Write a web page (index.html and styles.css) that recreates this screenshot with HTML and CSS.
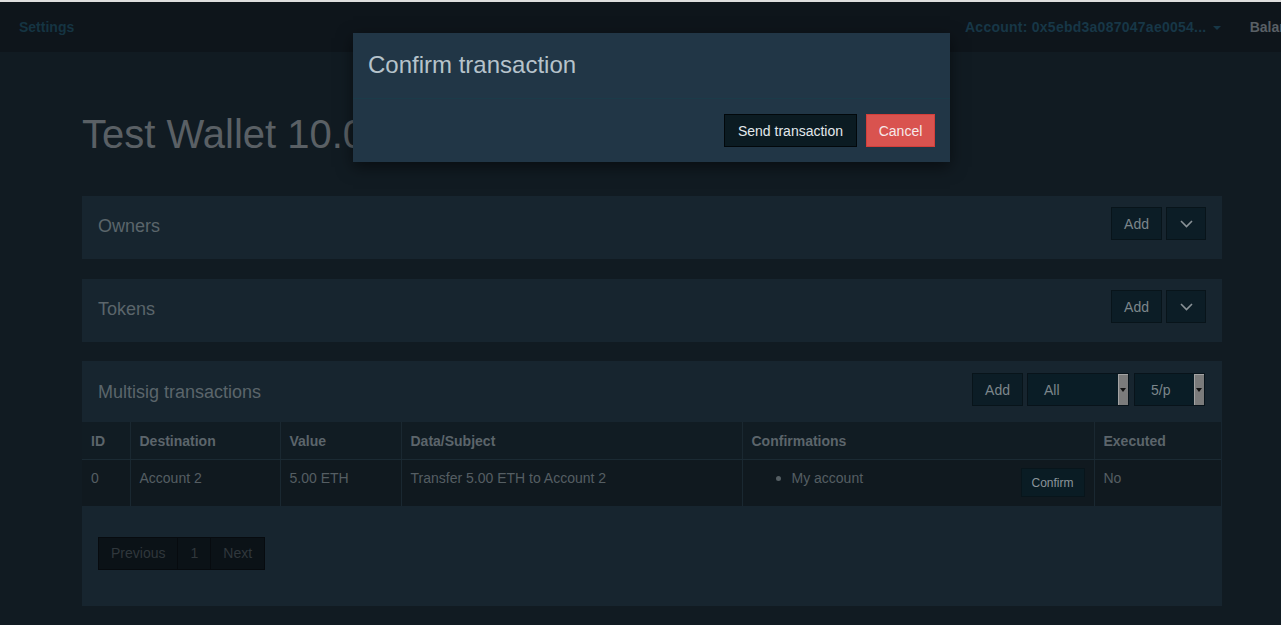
FILE: index.html
```html
<!DOCTYPE html>
<html lang="en">
<head>
<meta charset="utf-8">
<title>Test Wallet</title>
<link rel="stylesheet" href="styles.css">
</head>
<body>
<div class="topline"></div>
<nav class="navbar">
  <div class="nav-left"><a class="nav-link">Settings</a></div>
  <div class="nav-right">
    <a class="nav-link account">Account: 0x5ebd3a087047ae0054... <span class="caret"></span></a>
    <span class="nav-text">Balance: 100.00 ETH</span>
  </div>
</nav>

<main class="container">
  <h1 class="title">Test Wallet 10.00 ETH</h1>

  <section class="panel">
    <div class="panel-heading">
      <h3 class="panel-title">Owners</h3>
      <div class="actions">
        <button class="btn">Add</button>
        <button class="btn btn-icon"><svg width="13" height="8" viewBox="0 0 13 8"><polyline points="1,1 6.5,6.5 12,1" fill="none" stroke="#8a9297" stroke-width="1.6"/></svg></button>
      </div>
    </div>
  </section>

  <section class="panel">
    <div class="panel-heading">
      <h3 class="panel-title">Tokens</h3>
      <div class="actions">
        <button class="btn">Add</button>
        <button class="btn btn-icon"><svg width="13" height="8" viewBox="0 0 13 8"><polyline points="1,1 6.5,6.5 12,1" fill="none" stroke="#8a9297" stroke-width="1.6"/></svg></button>
      </div>
    </div>
  </section>

  <section class="panel panel-multisig">
    <div class="panel-heading ms-heading">
      <h3 class="panel-title">Multisig transactions</h3>
      <div class="actions">
        <button class="btn">Add</button>
        <div class="select sel-all"><span>All</span><span class="sel-arrow"></span></div>
        <div class="select sel-page"><span>5/p</span><span class="sel-arrow"></span></div>
      </div>
    </div>
    <table class="table">
      <colgroup>
        <col class="c-id"><col class="c-dest"><col class="c-val"><col class="c-data"><col class="c-conf"><col class="c-exec">
      </colgroup>
      <thead>
        <tr><th>ID</th><th>Destination</th><th>Value</th><th>Data/Subject</th><th>Confirmations</th><th>Executed</th></tr>
      </thead>
      <tbody>
        <tr>
          <td>0</td>
          <td>Account 2</td>
          <td>5.00 ETH</td>
          <td>Transfer 5.00 ETH to Account 2</td>
          <td class="conf-cell">
            <button class="btn btn-sm">Confirm</button>
            <ul class="conf-list"><li>My account</li></ul>
          </td>
          <td>No</td>
        </tr>
      </tbody>
    </table>
    <div class="panel-footer">
      <ul class="pagination">
        <li>Previous</li><li>1</li><li>Next</li>
      </ul>
    </div>
  </section>
</main>

<div class="modal">
  <div class="modal-header">
    <h4 class="modal-title">Confirm transaction</h4>
  </div>
  <div class="modal-footer">
    <button class="mbtn mbtn-dark">Send transaction</button>
    <button class="mbtn mbtn-danger">Cancel</button>
  </div>
</div>
</body>
</html>
```

FILE: styles.css
```css
* { box-sizing: border-box; }
html, body { margin: 0; padding: 0; }
body {
  background: #111b22;
  font-family: "Liberation Sans", Arial, sans-serif;
  font-size: 14px;
  line-height: 20px;
  color: #555e63;
  width: 1281px;
  height: 625px;
  overflow: hidden;
  position: relative;
}
.topline { height: 2px; background: #dedede; }

.navbar {
  height: 50px;
  background: #0e151b;
  display: flex;
  align-items: center;
  white-space: nowrap;
  overflow: hidden;
}
.nav-left { flex: 0 0 965px; padding-left: 19px; }
.nav-right { display: flex; align-items: center; flex: 0 0 auto; }
.nav-link { font-weight: bold; color: #153442; text-decoration: none; }
.account { color: #173747; margin-right: 29px; letter-spacing: 0.25px; }
.caret {
  display: inline-block;
  width: 0; height: 0;
  margin-left: 2px;
  vertical-align: middle;
  border-top: 4px solid #173747;
  border-left: 4px solid transparent;
  border-right: 4px solid transparent;
}
.nav-text { font-weight: bold; color: #596066; }

.container { margin-left: 82px; width: 1140px; }

.title {
  font-size: 40px;
  line-height: 44px;
  font-weight: normal;
  color: #5a6065;
  margin: 60px 0 40px;
  white-space: nowrap;
}

.panel { background: #17252f; margin-bottom: 20px; }
.panel-heading {
  display: flex;
  justify-content: space-between;
  align-items: flex-start;
  padding: 11px 16px 19px 16px;
}
.panel-title {
  margin: 3px 0 -3px;
  font-size: 18px;
  line-height: 33px;
  font-weight: normal;
  color: #5b656b;
}
.actions { display: flex; gap: 4px; }
.btn {
  height: 33px;
  padding: 0 12px;
  background: #0c1d26;
  border: 1px solid #08141a;
  color: #7c868b;
  font-family: inherit;
  font-size: 14px;
  line-height: 20px;
}
.btn-icon { width: 40px; padding: 0; display: flex; align-items: center; justify-content: center; }

.panel-multisig { margin-top: -1px; }
.ms-heading { padding: 12px 17px 16px 16px; }

.select {
  height: 33px;
  background: #0a1d26;
  border: 1px solid #08131a;
  color: #7c868b;
  display: flex;
  align-items: center;
  justify-content: space-between;
  padding: 0 0 0 16px;
}
.sel-all { width: 102px; }
.sel-page { width: 71px; margin-left: 1px; }
.sel-arrow {
  width: 10px;
  height: 31px;
  background: #7b7b7b;
  border-left: 1px solid #a3a3a3;
  border-top: 1px solid #a3a3a3;
  position: relative;
}
.sel-arrow::after {
  content: "";
  position: absolute;
  left: 1px; top: 13px;
  border-top: 4px solid #111;
  border-left: 3px solid transparent;
  border-right: 3px solid transparent;
}

.table {
  width: 1139px;
  table-layout: fixed;
  border-collapse: collapse;
}
.c-id { width: 48px; }
.c-dest { width: 150px; }
.c-val { width: 121px; }
.c-data { width: 341px; }
.c-conf { width: 352px; }
.c-exec { width: 127px; }
.table th, .table td {
  text-align: left;
  vertical-align: top;
  border-left: 1px solid #1a2831;
}
.table th:first-child, .table td:first-child { border-left: none; }
.table thead tr { background: #111c23; }
.table th {
  height: 37px;
  font-weight: bold;
  color: #5c656b;
  padding: 9px 8px 8px 9px;
  border-bottom: 1px solid #1b2a33;
}
.table tbody tr { background: #10191f; }
.table td { height: 46px; padding: 8px 8px 8px 9px; white-space: nowrap; }

.conf-list { margin: 0; padding-left: 40px; list-style: disc; }
.conf-list li::marker { font-size: 16px; }
.btn-sm {
  float: right;
  width: 64px;
  height: 29px;
  padding: 0;
  margin-right: 1px;
  font-size: 12px;
  line-height: 18px;
  background: #0a1c24;
  border: 1px solid #08151b;
  color: #8a949a;
}

.panel-footer { padding: 31px 16px 36px; }
.pagination {
  display: inline-flex;
  margin: 0;
  padding: 0;
  list-style: none;
  border: 1px solid #070b0f;
}
.pagination li {
  height: 31px;
  padding: 0 12px;
  line-height: 31px;
  background: #0b1217;
  color: #30373c;
  border-left: 1px solid #070b0f;
}
.pagination li:first-child { border-left: none; }

.modal {
  position: absolute;
  left: 353px;
  top: 33px;
  width: 597px;
  background: #213646;
  box-shadow: 0 5px 15px rgba(0, 0, 0, 0.5);
}
.modal-header { padding: 15px 15px 16px; border-bottom: 1px solid #1b3b49; }
.modal-title {
  margin: 0;
  font-size: 24px;
  line-height: 34px;
  font-weight: normal;
  color: #b6c3cb;
}
.modal-footer {
  display: flex;
  justify-content: flex-end;
  gap: 9px;
  padding: 15px;
}
.mbtn {
  height: 33px;
  padding: 0;
  font-family: inherit;
  font-size: 14px;
  line-height: 20px;
  border: 1px solid #000;
  text-align: center;
}
.mbtn-dark { width: 133px; background: #0b1b22; color: #e2e8ec; border-color: #02080b; }
.mbtn-danger { width: 69px; background: #d9534f; color: #f6e9e9; border-color: #d43f3a; }
```
